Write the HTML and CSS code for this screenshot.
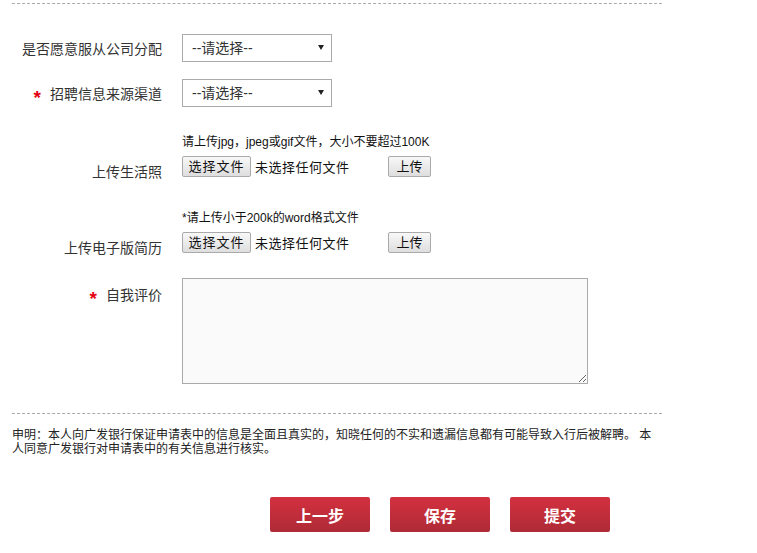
FILE: index.html
```html
<!DOCTYPE html>
<html lang="zh-CN">
<head>
    <meta charset="UTF-8">
    <title>应聘申请</title>
    <link rel="stylesheet" href="styles.css">
</head>
<body>
    <div class="wrap">
        <div class="line"></div>

        <form class="apply-form">
            <div class="row row-select first">
                <label class="row-label">是否愿意服从公司分配</label>
                <span class="select-box">
                    <select>
                        <option>--请选择--</option>
                        <option>是</option>
                        <option>否</option>
                    </select>
                </span>
            </div>

            <div class="row row-select">
                <label class="row-label"><span class="star">*</span>招聘信息来源渠道</label>
                <span class="select-box">
                    <select>
                        <option>--请选择--</option>
                    </select>
                </span>
            </div>

            <div class="row row-upload">
                <label class="row-label">上传生活照</label>
                <div class="upload">
                    <p class="hint">请上传jpg，jpeg或gif文件，大小不要超过100K</p>
                    <div class="upload-line">
                        <button type="button" class="file-btn">选择文件</button>
                        <span class="file-name">未选择任何文件</span>
                        <button type="button" class="up-btn">上传</button>
                    </div>
                </div>
            </div>

            <div class="row row-upload">
                <label class="row-label">上传电子版简历</label>
                <div class="upload">
                    <p class="hint">*请上传小于200k的word格式文件</p>
                    <div class="upload-line">
                        <button type="button" class="file-btn">选择文件</button>
                        <span class="file-name">未选择任何文件</span>
                        <button type="button" class="up-btn">上传</button>
                    </div>
                </div>
            </div>

            <div class="row row-text">
                <label class="row-label"><span class="star">*</span>自我评价</label>
                <textarea class="self-eval"></textarea>
            </div>
        </form>

        <div class="line line-bottom"></div>

        <p class="statement">申明：本人向广发银行保证申请表中的信息是全面且真实的，知晓任何的不实和遗漏信息都有可能导致入行后被解聘。 本人同意广发银行对申请表中的有关信息进行核实。</p>

        <div class="actions">
            <button type="button" class="red-btn">上一步</button>
            <button type="button" class="red-btn">保存</button>
            <button type="button" class="red-btn">提交</button>
        </div>
    </div>
</body>
</html>
```

FILE: styles.css
```css
body {
    margin: 0;
    background-color: #fff;
    font-family: "Liberation Sans", "Noto Sans CJK SC", sans-serif;
    color: #333;
}
.wrap {
    width: 650px;
    margin-left: 12px;
    padding-top: 3px;
}
.line {
    border-top: 1px dashed #aaa;
}
.line-bottom {
    margin-top: 29px;
}
.row {
    display: grid;
    grid-template-columns: 150px 1fr;
    column-gap: 20px;
}
.row-label {
    font-size: 14px;
    text-align: right;
    white-space: nowrap;
}
.star {
    color: #e60012;
    font-weight: bold;
    font-size: 19px;
    line-height: 14px;
    margin-right: 9px;
    position: relative;
    top: 5px;
}
.row-select {
    align-items: center;
    margin-top: 17px;
}
.row-select.first {
    margin-top: 30px;
}
.select-box {
    position: relative;
    display: inline-block;
    width: 150px;
    height: 28px;
}
.select-box select {
    appearance: none;
    -webkit-appearance: none;
    width: 150px;
    height: 28px;
    padding: 0 9px;
    border: 1px solid #aaa;
    background-color: #fff;
    font-family: inherit;
    font-size: 14px;
    color: #333;
    outline: none;
}
.select-box::after {
    content: "";
    position: absolute;
    right: 8px;
    top: 11px;
    border-left: 3px solid transparent;
    border-right: 3px solid transparent;
    border-top: 5px solid #222;
    pointer-events: none;
}
.row-upload {
    align-items: end;
    margin-top: 27px;
}
.row-upload + .row-upload {
    margin-top: 33px;
}
.row-upload .row-label {
    position: relative;
    top: 4px;
}
.hint {
    margin: 0 0 6px;
    font-size: 12px;
    line-height: 16px;
    color: #111;
}
.upload-line {
    display: flex;
    align-items: center;
    height: 21px;
}
.file-btn, .up-btn {
    height: 21px;
    padding: 0;
    border: 1px solid #aaa;
    border-radius: 2px;
    background: linear-gradient(#f8f8f8, #dedede);
    font-family: inherit;
    font-size: 13px;
    line-height: 19px;
    color: #111;
    white-space: nowrap;
    cursor: pointer;
}
.file-btn {
    width: 69px;
    letter-spacing: 1px;
}
.file-name {
    width: 133px;
    padding-left: 4px;
    font-size: 13px;
    letter-spacing: 0.5px;
    color: #111;
    white-space: nowrap;
}
.up-btn {
    width: 43px;
}
.row-text {
    align-items: start;
    margin-top: 25px;
}
.row-text .row-label {
    padding-top: 6px;
}
.self-eval {
    display: block;
    width: 406px;
    height: 106px;
    box-sizing: border-box;
    border: 1px solid #aaa;
    background-color: #fafafa;
    resize: both;
    outline: none;
}
.statement {
    margin: 14px 0 0;
    font-size: 12px;
    line-height: 14px;
    color: #222;
}
.actions {
    display: flex;
    gap: 20px;
    margin-top: 41px;
    padding-left: 258px;
}
.red-btn {
    width: 100px;
    height: 35px;
    border: none;
    border-radius: 2px;
    background: linear-gradient(#d4303f, #ae2b36);
    color: #fff;
    font-family: inherit;
    font-size: 16px;
    font-weight: bold;
    cursor: pointer;
}
```
